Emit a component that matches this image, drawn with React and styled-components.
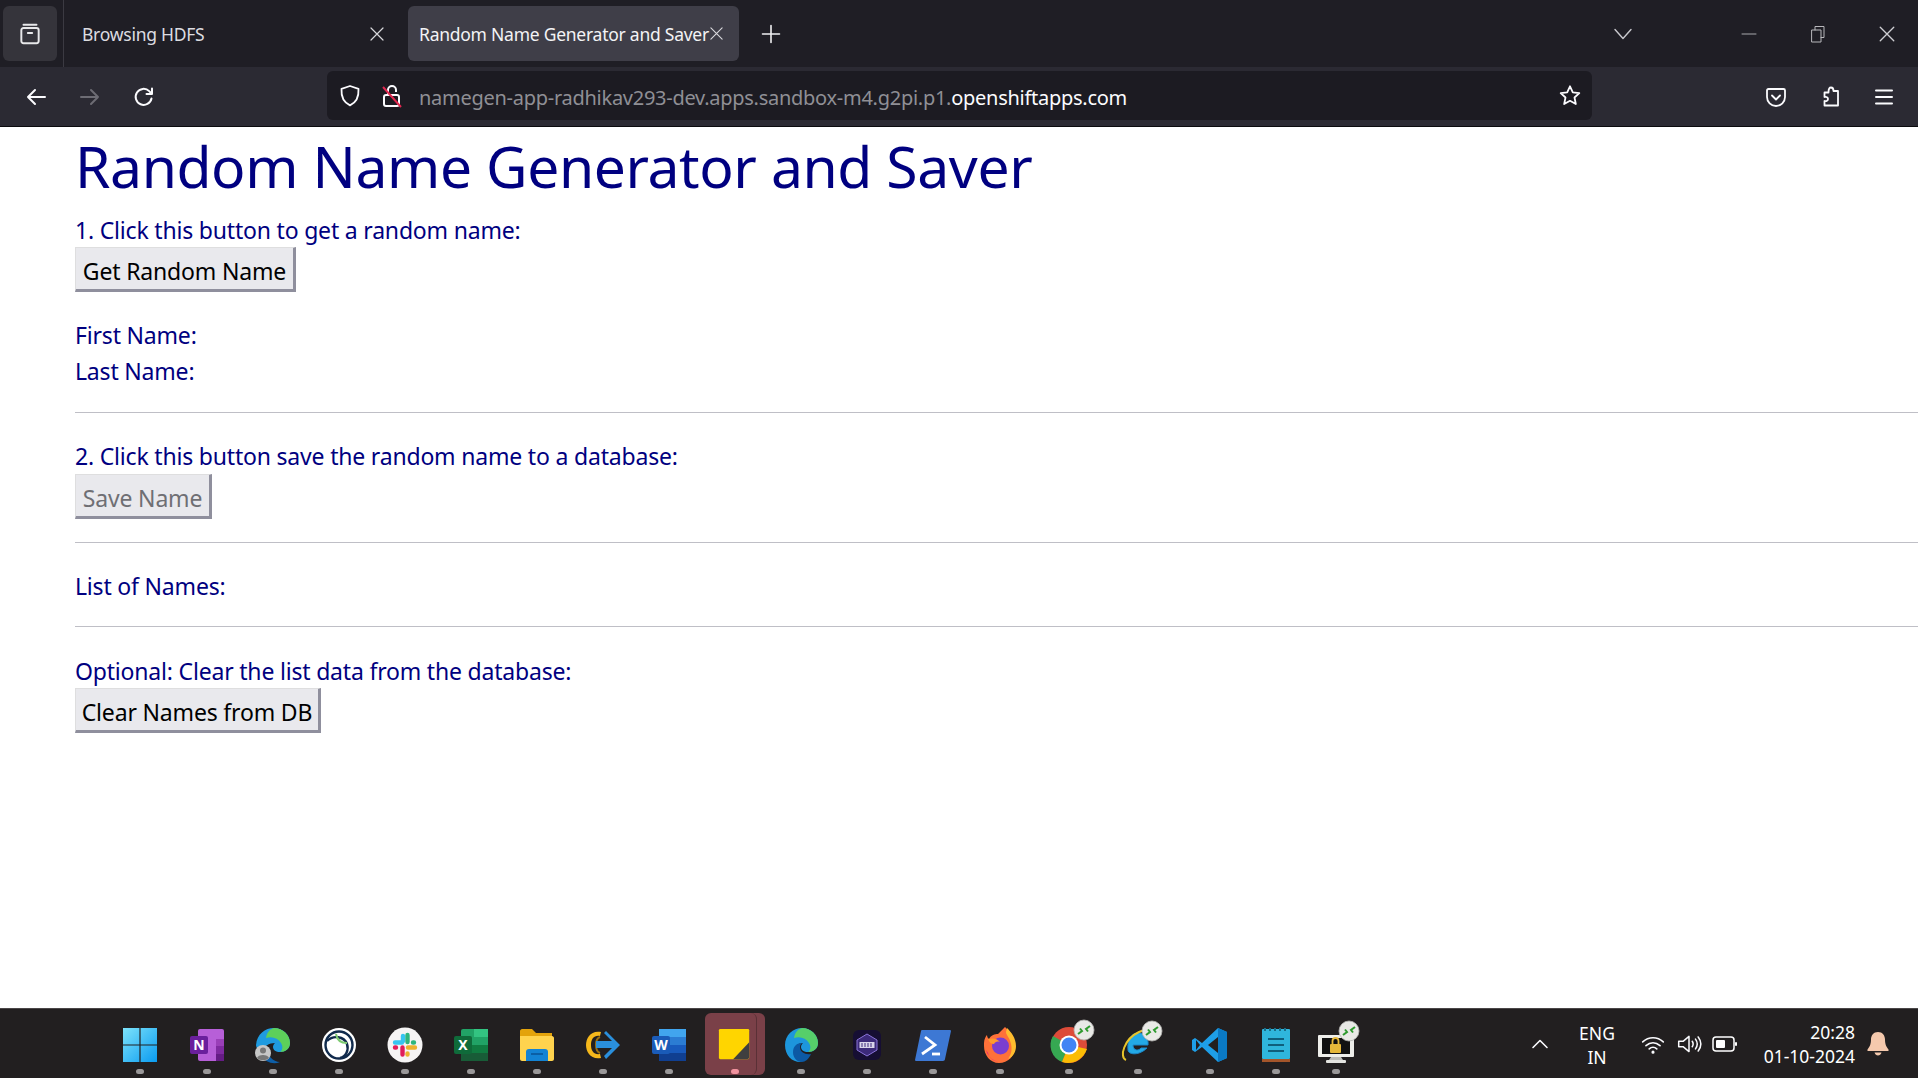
import React from "react"
import styled, { createGlobalStyle } from "styled-components"

const GlobalStyle = createGlobalStyle`
    html, body {
        margin: 0;
        padding: 0;
        height: 100%;
        overflow: hidden;
        background: #fff;
    }
    * {
        box-sizing: border-box;
    }
`

const Screen = styled.div`
    width: 1918px;
    height: 1078px;
    display: flex;
    flex-direction: column;
    font-family: "Noto Sans", "Open Sans", sans-serif;
`

/* browser chrome */
const TabBar = styled.div`
    height: 67px;
    flex: none;
    display: flex;
    align-items: center;
    background: #1f1e25;
    color: #fbfbfe;
    padding-left: 3px;
`

const ViewButton = styled.div`
    width: 54px;
    height: 55px;
    border-radius: 6px;
    background: #35343b;
    display: flex;
    align-items: center;
    justify-content: center;
    flex: none;
`

const TabDivider = styled.div`
    width: 1px;
    height: 67px;
    margin-left: 6px;
    background: #3b3a42;
    flex: none;
`

const Tab = styled.div`
    width: ${p => (p.$active ? "331px" : "327px")};
    height: 55px;
    flex: none;
    display: flex;
    align-items: center;
    justify-content: space-between;
    border-radius: 6px;
    padding: ${p => (p.$active ? "0 15px 0 11px" : "0 6px 0 18px")};
    background: ${p => (p.$active ? "#3f3e48" : "transparent")};
    margin-left: ${p => (p.$active ? "17px" : "0")};
    font-size: 17.5px;
    letter-spacing: -0.25px;
    white-space: nowrap;
    color: ${p => (p.$active ? "#f3f3f5" : "#dcdce0")};

    svg {
        flex: none;
    }
`

const IconSlot = styled.span`
    display: inline-flex;
    align-items: center;
    justify-content: center;
    flex: none;
    width: ${p => p.$w || 24}px;
    margin-left: ${p => p.$ml || 0}px;
`

const Toolbar = styled.div`
    height: 60px;
    flex: none;
    display: flex;
    align-items: center;
    background: #2b2a33;
    border-bottom: 1px solid #0b0b0e;
    padding-left: 24px;
`

const UrlBar = styled.div`
    width: 1265px;
    height: 49px;
    margin-left: 171px;
    flex: none;
    display: flex;
    align-items: center;
    border-radius: 6px;
    background: #1c1b22;
    padding: 0 10px 0 11px;
    margin-top: -2px;
`

const UrlText = styled.div`
    margin-left: 15px;
    padding-top: 3px;
    flex: 1;
    font-size: 20px;
    letter-spacing: -0.27px;
    color: #8f8f95;
    white-space: nowrap;

    b {
        font-weight: 400;
        color: #fbfbfe;
    }
`

/* page content */
const Page = styled.main`
    flex: 1;
    min-height: 0;
    background: #fff;
    padding-left: 75px;
    color: #000080;
    overflow: hidden;
`

const Title = styled.h1`
    margin: 0;
    height: 84px;
    font-size: 57px;
    line-height: 78px;
    font-weight: 400;
    letter-spacing: -0.4px;
    white-space: nowrap;
`

const Label = styled.div`
    height: 36px;
    font-size: 23px;
    line-height: ${p => (p.$low ? 38 : 36)}px;
    letter-spacing: -0.19px;
    white-space: nowrap;
`

const Button = styled.button`
    display: block;
    height: 45px;
    width: ${p => p.$w}px;
    padding: 4px 0 0;
    margin: 0;
    font: inherit;
    font-size: 23px;
    letter-spacing: -0.17px;
    white-space: nowrap;
    color: ${p => (p.disabled ? "#6f6f74" : "#000")};
    background: #e9e9ed;
    border: 2px solid;
    border-color: #dededf #8f8f9d #8f8f9d #dededf;
    border-width: 1px 3px 3px 1px;
`

const Result = styled.div`
    margin-top: 25px;
`

const Rule = styled.hr`
    margin: ${p => p.$top}px 0 ${p => p.$bottom}px;
    border: 0;
    height: 1px;
    background: #bfbfc6;
`

/* windows taskbar */
const Taskbar = styled.footer`
    height: 70px;
    flex: none;
    display: flex;
    align-items: center;
    background: #221f20;
    border-top: 1px solid #4a4748;
    padding-left: 106px;
    color: #fff;
`

const TaskCell = styled.div`
    position: relative;
    width: ${p => p.$w || 66}px;
    height: 62px;
    flex: none;
    display: flex;
    align-items: center;
    justify-content: center;
    padding-top: 2px;
    border-radius: 6px;

    svg {
        overflow: visible;
    }

    ${p =>
        p.$active &&
        `
        width: 60px;
        margin: 0 3px;
        background: #7a4048;

        &::before {
            content: "";
            position: absolute;
            top: 0;
            bottom: 0;
            right: 8px;
            width: 6px;
            border-right: 1px solid #5a3036;
            border-radius: 0 6px 6px 0;
        }
    `}

    &::after {
        content: "";
        position: absolute;
        left: 50%;
        bottom: 1px;
        width: 8px;
        height: 5px;
        margin-left: -4px;
        border-radius: 3px;
        background: ${p => (p.$active ? "#f0929e" : "#9a9899")};
    }
`

const Tray = styled.div`
    margin-left: auto;
    display: flex;
    align-items: center;
    font-family: "Noto Sans", "Open Sans", sans-serif;
    font-size: 17.5px;
    line-height: 24px;
    padding-right: 29px;
`

const Lang = styled.div`
    width: 54px;
    margin-left: 20px;
    padding-top: 2px;
    text-align: center;
`

const TrayIcons = styled.div`
    margin-left: 16px;
    display: flex;
    align-items: center;
    gap: 10px;
`

const Clock = styled.div`
    width: 96px;
    margin-left: 21px;
    text-align: right;
    white-space: nowrap;
`

const Bell = styled.div`
    margin-left: 12px;
    display: flex;
`

const Line = ({ size = 24, color = "#fbfbfe", width = 2, children, view = 24 }) => (
    <svg
        width={size}
        height={size}
        viewBox={`0 0 ${view} ${view}`}
        fill="none"
        stroke={color}
        strokeWidth={width}
        strokeLinecap="round"
        strokeLinejoin="round"
    >
        {children}
    </svg>
)

const CloseIcon = ({ size = 16, color = "#d8d8dc" }) => (
    <Line size={size} color={color} view={16} width={1.2}>
        <path d="M2 2l12 12M14 2L2 14" />
    </Line>
)

const RdpBadge = ({ x, y }) => (
    <g transform={`translate(${x} ${y})`}>
        <circle cx="31" cy="9" r="10" fill="#e9e9e6" stroke="#b5b5b2" strokeWidth="0.8" />
        <path d="M25 13l4-3-2-2.500M37 5l-4 3 2 2.500" fill="none" stroke="#2f9a2f" strokeWidth="2" />
    </g>
)

const Ico = ({ children, size = 38 }) => (
    <svg width={size} height={size} viewBox="0 0 38 38">
        {children}
    </svg>
)

const iconText = { fill: "#fff", fontFamily: "Noto Sans, sans-serif", fontWeight: 700 }

const WindowsIcon = () => (
    <Ico>
        <defs>
            <linearGradient id="win" x1="0" y1="0" x2="1" y2="1">
                <stop offset="0" stopColor="#7de3fb" />
                <stop offset="1" stopColor="#0a9bf0" />
            </linearGradient>
        </defs>
        <path fill="url(#win)" d="M2 2h16.400v16.400H2zM19.600 2H36v16.400H19.600zM2 19.600h16.400V36H2zM19.600 19.600H36V36H19.600z" />
    </Ico>
)

const OneNoteIcon = () => (
    <Ico>
        <rect x="10" y="3" width="26" height="32" rx="2" fill="#b75fd8" />
        <rect x="28" y="13" width="8" height="7" fill="#9a3fb8" />
        <rect x="28" y="20" width="8" height="8" fill="#7f2aa0" />
        <rect x="28" y="28" width="8" height="7" fill="#651c85" />
        <rect x="2" y="10" width="18" height="18" rx="2" fill="#6a1f9c" />
        <text x="11" y="24" textAnchor="middle" fontSize="14" {...iconText}>N</text>
    </Ico>
)

const EdgeProfileIcon = () => (
    <Ico>
        <path fill="#1f9be0" d="M2 19C3 8 11 2 20 2c9 0 16 7 16 15 0 6-5 9-10 9-4 0-7-2-7-5 0-2 1-3 2-4-6 0-11 3-13 8-3-1-6-3-6-6z" />
        <path fill="#5dd05a" d="M20 2c9 0 16 7 16 15 0 6-5 9-10 9 3-2 3-6 1-9C24 12 18 10 12 12 13 6 16 3 20 2z" />
        <path fill="#0e5fa8" d="M13 22c0 7 6 14 13 14-7 3-15 0-18-6 0-3 2-6 5-8z" />
        <circle cx="9" cy="27" r="8" fill="#c7c7c7" />
        <circle cx="9" cy="24.500" r="3" fill="#777" />
        <path fill="#777" d="M3 32c1-4 11-4 12 0-3 3-9 3-12 0z" />
    </Ico>
)

const CircleAppIcon = () => (
    <Ico>
        <circle cx="19" cy="19" r="17" fill="#fff" />
        <circle cx="19" cy="19" r="13.500" fill="none" stroke="#102a4c" strokeWidth="2.400" />
        <path d="M7 15c6-6 17-5 20 3 2 6-1 13-7 14" fill="none" stroke="#102a4c" strokeWidth="2.400" />
        <path d="M16 8c1 6 5 9 11 9" fill="none" stroke="#7ecb72" strokeWidth="2" />
    </Ico>
)

const SlackIcon = () => (
    <Ico>
        <circle cx="19" cy="19" r="17.500" fill="#f6f4f4" />
        <g strokeWidth="4.400" strokeLinecap="round" fill="none">
            <path stroke="#36c5f0" d="M17 10v5M9 16.500h7" />
            <path stroke="#2eb67d" d="M21.500 9v7M27 16.500h1" />
            <path stroke="#ecb22e" d="M21.500 27.500v1M22 21.500h7" />
            <path stroke="#e01e5a" d="M9 21.500h1M16.500 21.500v7" />
        </g>
    </Ico>
)

const ExcelIcon = () => (
    <Ico>
        <rect x="9" y="3" width="27" height="32" rx="2" fill="#21a366" />
        <rect x="22" y="3" width="14" height="8" fill="#33c481" />
        <rect x="9" y="19" width="27" height="8" fill="#107c41" />
        <rect x="9" y="27" width="27" height="8" fill="#185c37" />
        <rect x="2" y="10" width="18" height="18" rx="2" fill="#0f6b3a" />
        <text x="11" y="24" textAnchor="middle" fontSize="14" {...iconText}>X</text>
    </Ico>
)

const FolderIcon = () => (
    <Ico>
        <path fill="#e3a30c" d="M2 5c0-1 1-2 2-2h10l4 4h16v8H2z" />
        <path fill="#ffd34e" d="M2 10h32c1 0 2 1 2 2v21c0 1-1 2-2 2H4c-1 0-2-1-2-2z" />
        <path fill="#1383d4" d="M8 35V26c0-2 1-3 3-3h16c2 0 3 1 3 3v9z" />
        <rect x="13" y="27" width="12" height="2" fill="#0b5fa5" />
    </Ico>
)

const ArrowAppIcon = () => (
    <Ico>
        <path d="M17 6C7 4 2 12 2 19s5 15 15 13l-1-4c-6 1-9-3-9-9s3-10 9-9z" fill="#f6b81b" />
        <path d="M16 11c-3 1-4 4-4 8s1 7 4 8" fill="none" stroke="#9a6f10" strokeWidth="2" />
        <path d="M22 5l14 14-14 14-2-3 8-8H12v-7h16l-8-8z" fill="#2a8fdc" />
    </Ico>
)

const WordIcon = () => (
    <Ico>
        <rect x="9" y="3" width="27" height="32" rx="2" fill="#2b7cd3" />
        <rect x="9" y="3" width="27" height="8" fill="#41a5ee" />
        <rect x="9" y="19" width="27" height="8" fill="#185abd" />
        <rect x="9" y="27" width="27" height="8" fill="#103f91" />
        <rect x="2" y="10" width="18" height="18" rx="2" fill="#1a5bb8" />
        <text x="11" y="24" textAnchor="middle" fontSize="14" {...iconText}>W</text>
    </Ico>
)

const StickyIcon = () => (
    <Ico size={36}>
        <rect x="2" y="2" width="32" height="32" rx="1.500" fill="#ffd500" />
        <path d="M34 16v16c0 1-1 2-2 2H17z" fill="#3f3f3f" />
    </Ico>
)

const EdgeIcon = () => (
    <Ico>
        <path fill="#1d96dc" d="M3 19C3 9 11 2 20 2c9 0 16 7 16 15 0 6-5 9-10 9-4 0-7-2-7-5 0-2 1-3 2-4-6 0-9 4-9 9 0 4 3 8 8 10C11 37 3 30 3 19z" />
        <path fill="#56cf6a" d="M20 2c9 0 16 7 16 15 0 6-5 9-10 9 3-2 3-6 1-9-3-5-9-7-15-5 1-6 4-9 8-10z" />
        <path fill="#0c59a4" d="M11 26c0-5 3-9 9-9-1 1-2 2-2 4 0 5 5 8 11 7-2 5-6 8-9 8-5 0-9-4-9-10z" />
    </Ico>
)

const HexAppIcon = () => (
    <Ico>
        <rect x="5" y="4" width="28" height="30" rx="6" fill="#160e33" />
        <path d="M19 8l10 6v10l-10 6-10-6V14z" fill="#3c2a7a" stroke="#8a74d8" strokeWidth="1" />
        <rect x="11.500" y="16" width="15" height="6" fill="#d8d4ea" />
        <path d="M14 17v4M17 17v4M20 17v4M23 17v4" stroke="#3c2a7a" strokeWidth="1" />
    </Ico>
)

const PowerShellIcon = () => (
    <Ico>
        <path d="M8 4h28c1 0 1 1 1 1l-6 28c0 1-1 2-2 2H2c-1 0-1-1-1-1L7 5c0-1 1-1 1-1z" fill="#3d78d4" />
        <path d="M11 11l10 8-13 9" fill="none" stroke="#fff" strokeWidth="2.800" />
        <path d="M18 28h8" stroke="#fff" strokeWidth="2.800" />
    </Ico>
)

const FirefoxIcon = () => (
    <Ico>
        <path fill="#ff7139" d="M3 17c0-4 2-7 3-8 0 2 1 3 2 4 2-4 6-5 9-5l7-7c3 3 10 10 10 20 0 9-7 16-16 16S3 29 3 20z" />
        <path fill="#ffbd2e" d="M26 2c4 4 9 10 9 18 0 6-3 11-8 13 4-5 4-11 3-15-1-6-5-9-5-12z" />
        <path fill="#e31587" d="M5 24c2 7 8 12 15 12-7 0-12-4-13-9z" />
        <circle cx="19.500" cy="20" r="8.500" fill="#7a3ed0" />
        <path fill="#ff9b2e" d="M7 13c4-1 9-1 12 3-3-1-5 0-6 2-3 0-5-2-6-5z" />
    </Ico>
)

const ChromeRdpIcon = () => (
    <Ico>
        <circle cx="19" cy="19" r="18" fill="#dd4b39" />
        <path d="M19 19L3 10A18 18 0 0 0 12 36z" fill="#36a852" />
        <path d="M19 19l-7 17c8 3 20 0 25-13z" fill="#fbbc05" />
        <circle cx="19" cy="19" r="9.500" fill="#fff" />
        <circle cx="19" cy="19" r="7.500" fill="#4285f4" />
        <RdpBadge x={3} y={-5} />
    </Ico>
)

const IeRdpIcon = () => (
    <Ico>
        <path d="M9 24c0 3 5 5 11 3 3-1 6-3 8-5h-6c-2 3-8 3-8-3h15c1-8-5-13-11-12C12 8 8 14 9 24z" fill="#23a9e6" stroke="#1b86c8" strokeWidth="1" />
        <path d="M7 34C0 31 5 13 20 6c9-4 15-2 14 2" fill="none" stroke="#e8c32a" strokeWidth="2" />
        <RdpBadge x={2} y={-4} />
    </Ico>
)

const VsCodeIcon = () => (
    <Ico>
        <path d="M27 2l9 4v26l-9 4-16-15-7 5-3-2v-10l3-2 7 5z" fill="#1e9fe8" />
        <path d="M27 2l9 4v26l-9 4z" fill="#0a79c4" />
        <path d="M27 11l-10 8 10 8z" fill="#221f20" />
        <path d="M5 14l4 5-4 5z" fill="#221f20" />
    </Ico>
)

const NotepadIcon = () => (
    <Ico>
        <rect x="5" y="3" width="28" height="30" rx="1" fill="#2fb6dc" />
        <path d="M5 33h28v3H5z" fill="#a4552a" />
        <path d="M8 2v3M13 2v3M18 2v3M23 2v3M28 2v3" stroke="#1a6f8a" strokeWidth="2" />
        <path d="M11 13h16M11 19h16M11 25h16" stroke="#0f5f7c" strokeWidth="2" />
    </Ico>
)

const MonitorRdpIcon = () => (
    <Ico>
        <rect x="1" y="9" width="36" height="22" rx="1" fill="#eeeeea" />
        <rect x="5" y="12" width="28" height="16" fill="#111" />
        <path d="M14 31h10l2 3H12z" fill="#bcbcb8" />
        <rect x="9" y="34" width="20" height="3" rx="1" fill="#e4e4e0" />
        <rect x="13" y="18" width="11" height="9" rx="1" fill="#e6b83a" />
        <path d="M15.500 18v-3a3 3 0 0 1 6 0v3" fill="none" stroke="#e6b83a" strokeWidth="1.800" />
        <RdpBadge x={1} y={-4} />
    </Ico>
)

const apps = [
    { key: "start", Icon: WindowsIcon, w: 68 },
    { key: "onenote", Icon: OneNoteIcon },
    { key: "edge-profile", Icon: EdgeProfileIcon },
    { key: "circle", Icon: CircleAppIcon },
    { key: "slack", Icon: SlackIcon },
    { key: "excel", Icon: ExcelIcon },
    { key: "folder", Icon: FolderIcon },
    { key: "arrow", Icon: ArrowAppIcon },
    { key: "word", Icon: WordIcon },
    { key: "sticky", Icon: StickyIcon, active: true },
    { key: "edge", Icon: EdgeIcon },
    { key: "hex", Icon: HexAppIcon },
    { key: "powershell", Icon: PowerShellIcon },
    { key: "firefox", Icon: FirefoxIcon, w: 68 },
    { key: "chrome", Icon: ChromeRdpIcon, w: 70 },
    { key: "ie", Icon: IeRdpIcon, w: 68 },
    { key: "vscode", Icon: VsCodeIcon, w: 76 },
    { key: "notepad", Icon: NotepadIcon, w: 56 },
    { key: "monitor", Icon: MonitorRdpIcon, w: 64 },
]

const App = () => (
    <Screen>
        <GlobalStyle />
        <TabBar>
            <ViewButton>
                <Line size={26} width={1.8} color="#e8e8ea">
                    <path d="M6 3.500h12M4 8.500c0-1.200.8-2 2-2h12c1.200 0 2 .8 2 2v10c0 1.200-.8 2-2 2H6c-1.200 0-2-.8-2-2zM10 11h4" />
                </Line>
            </ViewButton>
            <TabDivider />
            <Tab>
                Browsing HDFS
                <CloseIcon />
            </Tab>
            <Tab $active>
                Random Name Generator and Saver
                <CloseIcon size={15} />
            </Tab>
            <IconSlot $w={24} $ml={20}>
                <Line size={22} view={22} width={1.6} color="#f0f0f2">
                    <path d="M11 2.500v17M2.500 11h17" />
                </Line>
            </IconSlot>
            <IconSlot $w={22} $ml={829}>
                <Line size={20} view={20} width={1.4} color="#c9c9ce">
                    <path d="M2 5.500l8 9 8-9" />
                </Line>
            </IconSlot>
            <IconSlot $w={20} $ml={105}>
                <Line size={20} view={20} width={1} color="#a8a8ad">
                    <path d="M3 10h14" />
                </Line>
            </IconSlot>
            <IconSlot $w={20} $ml={49}>
                <Line size={20} view={20} width={1} color="#b8b8bc">
                    <path d="M4 6h9v12H4zM7 6V2.500h9v11h-3" />
                </Line>
            </IconSlot>
            <IconSlot $w={20} $ml={49}>
                <CloseIcon size={18} color="#cfcfd3" />
            </IconSlot>
        </TabBar>
        <Toolbar>
            <IconSlot>
                <Line>
                    <path d="M21 12H4M11 5l-7 7 7 7" />
                </Line>
            </IconSlot>
            <IconSlot $ml={30}>
                <Line color="#6d6c74">
                    <path d="M3 12h17M13 5l7 7-7 7" />
                </Line>
            </IconSlot>
            <IconSlot $ml={30}>
                <Line>
                    <path d="M19.500 13.500a8 8 0 1 1-2.300-7.400L20 9M20 3.500V9h-5.500" />
                </Line>
            </IconSlot>
            <UrlBar>
                <IconSlot>
                    <Line size={25} width={1.8}>
                        <path d="M12 2.500l8.500 2.800c.5 9-2 13.700-8.500 16.500C5.500 19 3 14.300 3.500 5.300z" />
                    </Line>
                </IconSlot>
                <IconSlot $ml={18}>
                    <svg width="24" height="26" viewBox="0 0 24 26" fill="none">
                        <rect x="4" y="12" width="15" height="11" rx="2" stroke="#fbfbfe" strokeWidth="2" />
                        <path d="M8 12V7a4 4 0 0 1 8 0v2" stroke="#fbfbfe" strokeWidth="2" />
                        <path d="M3 4l18 20" stroke="#e22850" strokeWidth="2" />
                    </svg>
                </IconSlot>
                <UrlText>
                    namegen-app-radhikav293-dev.apps.sandbox-m4.g2pi.p1.<b>openshiftapps.com</b>
                </UrlText>
                <IconSlot>
                    <Line size={25} width={1.8}>
                        <path d="M12 2.800l2.800 6 6.500.8-4.800 4.400 1.300 6.500L12 17.300l-5.800 3.200 1.300-6.500L2.700 9.600l6.500-.8z" />
                    </Line>
                </IconSlot>
            </UrlBar>
            <IconSlot $ml={172}>
                <Line size={24} width={1.8}>
                    <path d="M4.500 4h15c1 0 1.500.6 1.500 1.500V12c0 5-4 9-9 9s-9-4-9-9V5.500C3 4.600 3.500 4 4.500 4zM8 10.500l4 4 4-4" />
                </Line>
            </IconSlot>
            <IconSlot $ml={31}>
                <Line size={25} width={1.8}>
                    <path d="M12 3c1.800 0 2.500 1.200 2.500 3.500H19V21H5.500v-4.500c2 .5 3.500-.5 3.500-2s-1.500-2.500-3.500-2V8H9.500C9.500 5 10.200 3 12 3z" />
                </Line>
            </IconSlot>
            <IconSlot $ml={29}>
                <Line size={24} width={2}>
                    <path d="M4 5.500h16M4 12h16M4 18.500h16" />
                </Line>
            </IconSlot>
        </Toolbar>
        <Page>
            <Title>Random Name Generator and Saver</Title>
            <Label $low>1. Click this button to get a random name:</Label>
            <Button $w={221}>Get Random Name</Button>
            <Result>
                <Label>First Name:</Label>
                <Label>Last Name:</Label>
            </Result>
            <Rule $top={23} $bottom={25} />
            <Label>2. Click this button save the random name to a database:</Label>
            <Button $w={137} disabled>
                Save Name
            </Button>
            <Rule $top={23} $bottom={25} />
            <Label>List of Names:</Label>
            <Rule $top={22} $bottom={25} />
            <Label $low>Optional: Clear the list data from the database:</Label>
            <Button $w={246}>Clear Names from DB</Button>
        </Page>
        <Taskbar>
            {apps.map(({ key, Icon, w, active }) => (
                <TaskCell key={key} $w={w} $active={active}>
                    <Icon />
                </TaskCell>
            ))}
            <Tray>
                <Line size={20} view={20} width={1.6}>
                    <path d="M3 13.500L10 6.500l7 7" />
                </Line>
                <Lang>
                    ENG
                    <br />
                    IN
                </Lang>
                <TrayIcons>
                    <Line size={26} view={24} width={1.5}>
                        <path d="M2.500 10C8 5 16 5 21.500 10M5.500 13.500c4-3.500 9-3.500 13 0M8.500 16.500c2-1.800 5-1.800 7 0" />
                        <circle cx="12" cy="19.500" r="0.700" fill="#fff" />
                    </Line>
                    <Line size={26} view={24} width={1.4}>
                        <path d="M2.500 9.500h4L12 5v14l-5.500-4.500h-4zM15 9.500c1 1.500 1 3.500 0 5M18 7.500c2 2.800 2 6.200 0 9M20.500 5.500c3 4 3 9 0 13" />
                    </Line>
                    <svg width="26" height="20" viewBox="0 0 26 20" fill="none">
                        <rect x="1" y="3" width="21" height="14" rx="3" stroke="#fff" strokeWidth="1.500" />
                        <rect x="4" y="6" width="9" height="8" rx="1" fill="#fff" />
                        <rect x="23" y="8" width="2" height="4" rx="1" fill="#fff" />
                    </svg>
                </TrayIcons>
                <Clock>
                    20:28
                    <br />
                    01-10-2024
                </Clock>
                <Bell>
                    <svg width="22" height="26" viewBox="0 0 22 26">
                        <path d="M11 1c-4.500 0-7 3.500-7 7.500 0 5-1.500 7.500-3.500 10v1.500h21v-1.500c-2-2.500-3.500-5-3.500-10C18 4.500 15.500 1 11 1z" fill="#f5c9ad" />
                        <path d="M7.500 21.500h7c-.5 2-2 3-3.500 3s-3-1-3.500-3z" fill="#f5c9ad" />
                    </svg>
                </Bell>
            </Tray>
        </Taskbar>
    </Screen>
)

export default App
